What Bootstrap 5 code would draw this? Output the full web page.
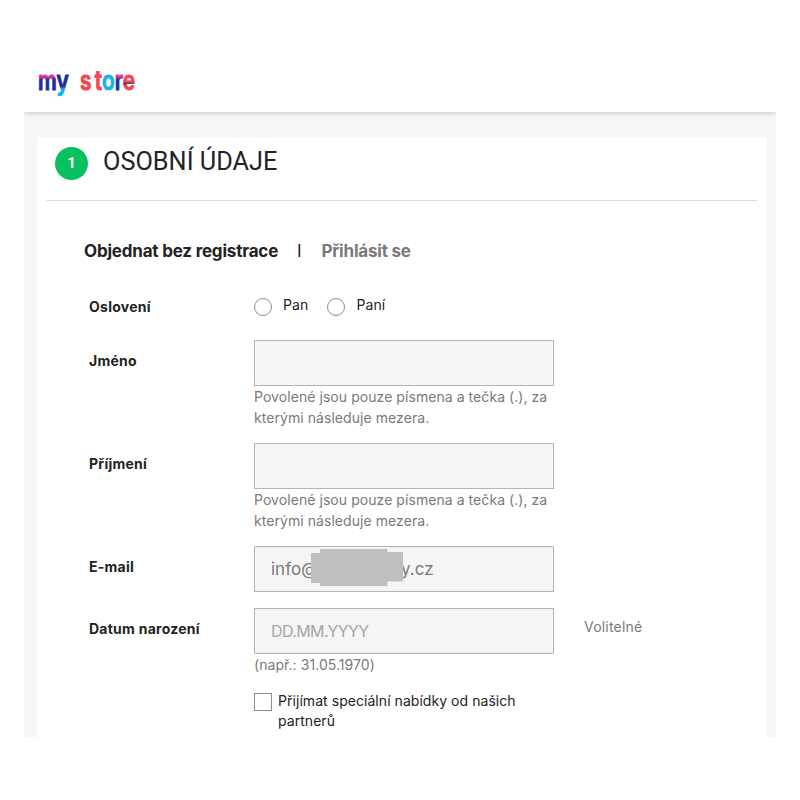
<!DOCTYPE html>
<html lang="cs">
<head>
  <meta charset="UTF-8" />
  <meta name="viewport" content="width=device-width, initial-scale=1.0"/>
  <title>Osobní údaje | my store</title>
  <link href="https://cdn.jsdelivr.net/npm/bootstrap@5.3.3/dist/css/bootstrap.min.css" rel="stylesheet"/>
  <style>
    html, body { height: 800px; overflow: hidden; }
    body {
      background: #fff;
      color: #232323;
      font-family: Inter, "Noto Sans", sans-serif;
      font-size: 14px;
    }
    .shop-frame {
      margin: 0 24px;
      height: 737px;
      overflow: hidden;
      background: #f6f6f6;
      display: flex;
      flex-direction: column;
    }
    .shop-header {
      flex: 0 0 112px;
      background: #fff;
      padding: 64px 0 0 14px;
      box-shadow: 0 1px 5px rgba(0,0,0,.2);
    }
    .shop-logo { display: block; }
    .shop-logo text {
      font-family: Inter, sans-serif;
      font-weight: 600;
      font-size: 26px;
      stroke-width: 1;
      stroke-linejoin: round;
    }
    .step-panel {
      margin: 25px 9px 0 13px;
      background: #fff;
      flex: 1;
    }
    .step-head {
      height: 64px;
      margin: 0 10px 0 9px;
      border-bottom: 1px solid #dcdcdc;
      padding-left: 9px;
      gap: 15px;
    }
    .step-num {
      width: 33px;
      height: 33px;
      margin-top: 10px;
      background: #07c160;
      color: #fff;
      font-family: Roboto, sans-serif;
      font-weight: 700;
      font-size: 15px;
    }
    .step-title {
      font-family: Roboto, sans-serif;
      font-size: 25.3px;
      font-weight: 400;
      line-height: 30px;
      margin: 10px 0 0;
      color: #232323;
    }
    .auth-tabs {
      padding: 40px 0 0 47px;
      font-size: 17px;
      font-weight: 700;
      line-height: 20px;
      gap: 19px;
      letter-spacing: -.2px;
    }
    .tab-muted { color: #7a7a7a; margin-left: 1px; }
    .tab-sep { font-weight: 400; }
    .reg-form { padding: 0 0 0 52px; }
    .form-line { display: flex; }
    .form-name {
      flex: 0 0 165px;
      font-weight: 700;
      font-size: 14px;
      line-height: 20px;
      letter-spacing: .25px;
    }
    .name-input { padding-top: 11px; }
    .form-field { flex: 0 0 300px; }
    .form-extra { padding: 9px 0 0 30px; color: #7a7a7a; font-size: 14px; line-height: 20px; letter-spacing: .2px; }
    .shop-input.form-control {
      height: 46px;
      background: #f5f5f5;
      border: 1px solid #b5b5b5;
      border-radius: 0;
      padding: 0 16px;
      font-size: 17px;
      color: #7a7a7a;
      box-shadow: none;
    }
    .shop-input::placeholder { color: #a5a5a5; font-size: 16px; letter-spacing: -.6px; }
    .field-hint { color: #7a7a7a; font-size: 14px; line-height: 21px; letter-spacing: .06px; }
    .email-mask {
      position: absolute;
      left: 57px;
      top: 3px;
      width: 92px;
      height: 37px;
      background: #bfbfbf;
      clip-path: polygon(0 11%, 10% 11%, 10% 0, 83% 0, 83% 8%, 100% 8%, 100% 88%, 83% 88%, 83% 100%, 10% 100%, 10% 92%, 0 92%);
    }
    .shop-radio.form-check-input {
      width: 18px;
      height: 18px;
      margin: 0 11px 0 0;
      border: 1px solid #8f8f8f;
      background-color: #fff;
      flex: none;
    }
    .shop-check.form-check-input {
      width: 18px;
      height: 18px;
      margin: 0 6px 0 0;
      border: 1px solid #8f8f8f;
      border-radius: 0;
      flex: none;
    }
    .radio-text { line-height: 18px; color: #232323; margin: -3px 19px 0 0; letter-spacing: .1px; }
    .check-text { line-height: 20px; color: #232323; margin-top: -2px; letter-spacing: .05px; }
  </style>
</head>
<body>

<div class="shop-frame">
  <!-- Header -->
  <header class="shop-header">
    <svg class="shop-logo" width="104" height="36" viewBox="0 0 104 36" role="img" aria-label="my store">
      <defs>
        <linearGradient id="lgM" gradientUnits="userSpaceOnUse" x1="0" y1="0" x2="0" y2="36"><stop offset=".36" stop-color="#e0338f"/><stop offset=".44" stop-color="#1c2c9c"/></linearGradient>
        <linearGradient id="lgY" gradientUnits="userSpaceOnUse" x1="0" y1="0" x2="0" y2="36"><stop offset=".62" stop-color="#1c2c9c"/><stop offset=".7" stop-color="#12b5e6"/></linearGradient>
        <linearGradient id="lgE" gradientUnits="userSpaceOnUse" x1="0" y1="0" x2="0" y2="36"><stop offset=".5" stop-color="#f4474f"/><stop offset=".55" stop-color="#123c5c"/><stop offset=".6" stop-color="#f4474f"/></linearGradient>
      </defs>
      <text transform="scale(.8 1)" y="26" x="0 23 30 52.5 71 80 96 106"><tspan fill="url(#lgM)" stroke="url(#lgM)">m</tspan><tspan fill="url(#lgY)" stroke="url(#lgY)">y</tspan> <tspan fill="#f4474f" stroke="#f4474f">st</tspan><tspan fill="#12b5e6" stroke="#12b5e6">o</tspan><tspan fill="url(#lgM)" stroke="url(#lgM)">r</tspan><tspan fill="url(#lgE)" stroke="url(#lgE)">e</tspan></text>
    </svg>
  </header>

  <!-- Step 1 -->
  <section class="step-panel">
    <div class="step-head d-flex align-items-start">
      <span class="step-num rounded-circle d-flex align-items-center justify-content-center">1</span>
      <h1 class="step-title">OSOBNÍ ÚDAJE</h1>
    </div>

    <div class="auth-tabs d-flex">
      <span>Objednat bez registrace</span>
      <span class="tab-sep">I</span>
      <span class="tab-muted">Přihlásit se</span>
    </div>

    <form class="reg-form">
      <div class="form-line" style="margin-top:36px">
        <div class="form-name">Oslovení</div>
        <div class="form-field d-flex align-items-center" style="margin-top:-1px">
          <input class="form-check-input shop-radio" type="radio" name="title" id="pan" />
          <label class="radio-text" for="pan">Pan</label>
          <input class="form-check-input shop-radio" type="radio" name="title" id="pani" />
          <label class="radio-text" for="pani">Paní</label>
        </div>
      </div>

      <div class="form-line" style="margin-top:23px">
        <div class="form-name name-input">Jméno</div>
        <div class="form-field">
          <input class="form-control shop-input" type="text" />
          <div class="field-hint">Povolené jsou pouze písmena a tečka (.), za kterými následuje mezera.</div>
        </div>
      </div>

      <div class="form-line" style="margin-top:15px">
        <div class="form-name name-input">Příjmení</div>
        <div class="form-field">
          <input class="form-control shop-input" type="text" />
          <div class="field-hint">Povolené jsou pouze písmena a tečka (.), za kterými následuje mezera.</div>
        </div>
      </div>

      <div class="form-line" style="margin-top:15px">
        <div class="form-name name-input">E-mail</div>
        <div class="form-field position-relative">
          <input class="form-control shop-input" type="text" value="info@wwwwwwy.cz" />
          <span class="email-mask"></span>
        </div>
      </div>

      <div class="form-line" style="margin-top:16px">
        <div class="form-name name-input">Datum narození</div>
        <div class="form-field">
          <input class="form-control shop-input" type="text" placeholder="DD.MM.YYYY" />
          <div class="field-hint">(např.: 31.05.1970)</div>
        </div>
        <div class="form-extra">Volitelné</div>
      </div>

      <div class="form-line" style="margin-top:18px">
        <div class="form-name"></div>
        <div class="form-field d-flex" style="padding-right:20px">
          <input class="form-check-input shop-check" type="checkbox" id="offers" />
          <label class="check-text" for="offers">Přijímat speciální nabídky od našich partnerů</label>
        </div>
      </div>
    </form>
  </section>
</div>

<script src="https://cdn.jsdelivr.net/npm/bootstrap@5.3.3/dist/js/bootstrap.bundle.min.js"></script>
</body>
</html>
